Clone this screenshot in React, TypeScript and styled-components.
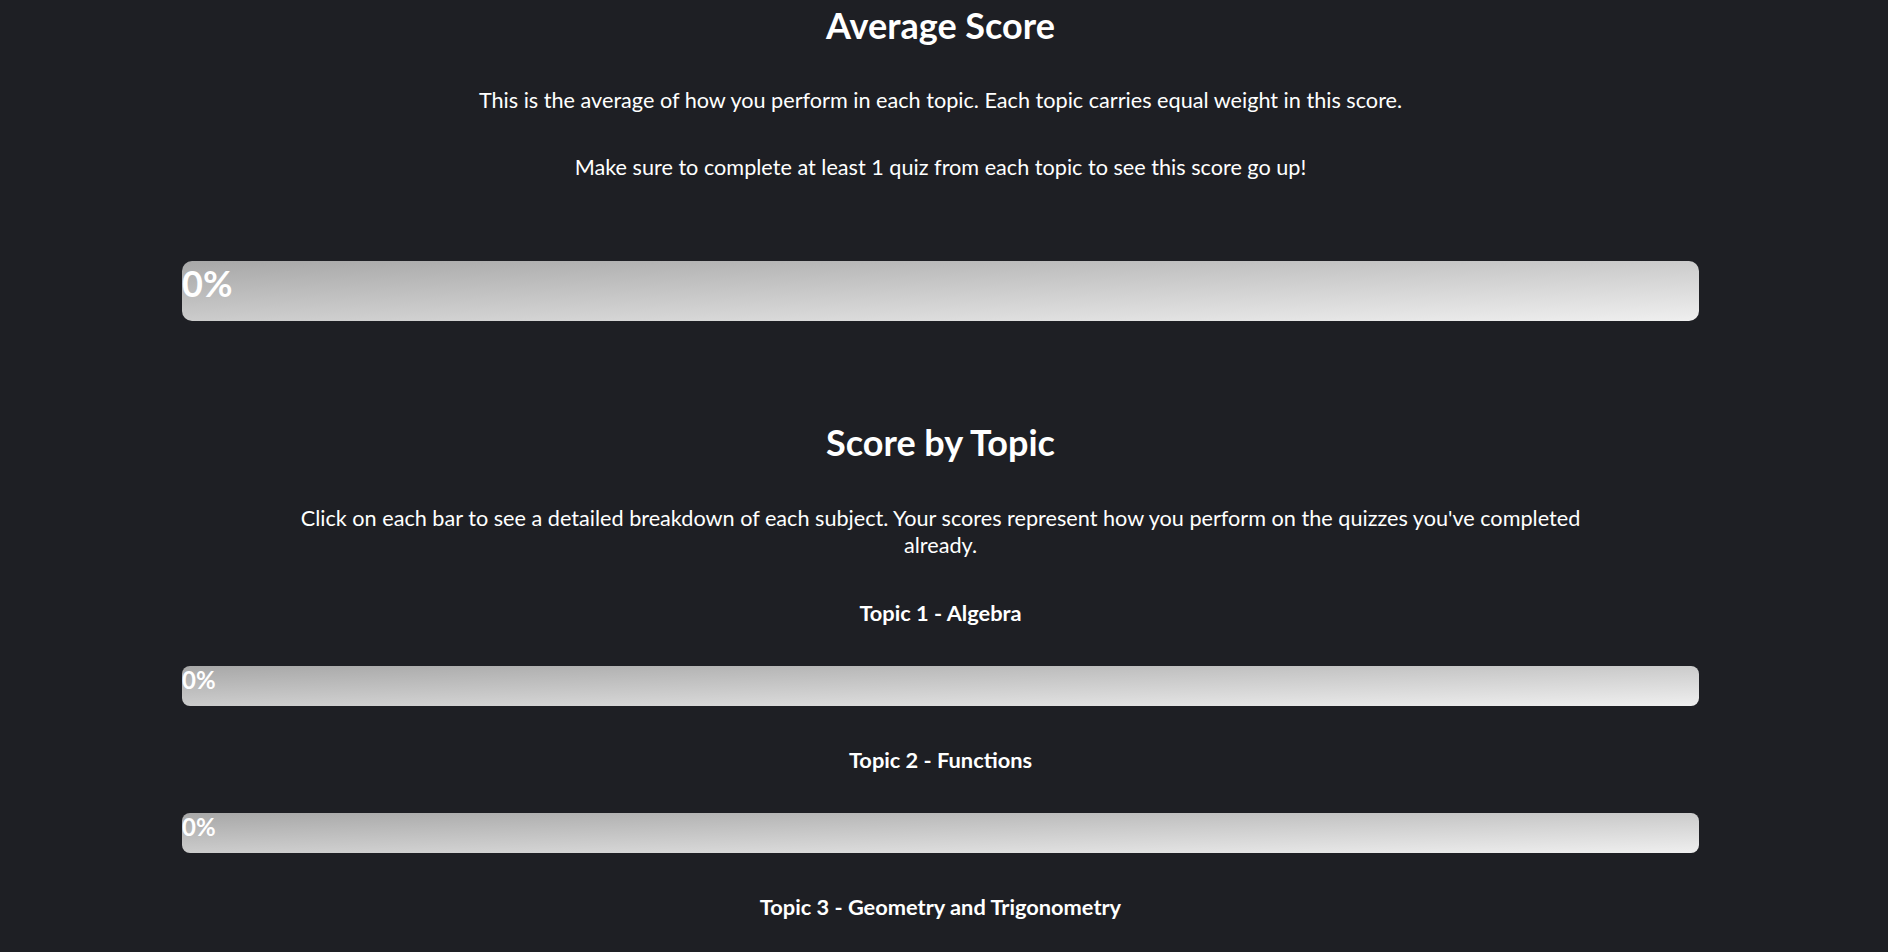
import React from "react";
import styled, { createGlobalStyle } from "styled-components";

const GlobalStyle = createGlobalStyle`
  html, body {
    margin: 0;
    padding: 0;
    background: #1e1f24;
  }
  body {
    font-family: Lato, "Open Sans", sans-serif;
    color: #ffffff;
  }
`;

const Page = styled.main`
  display: flex;
  flex-direction: column;
  padding: 0 189px 0 182px;
  min-height: 952px;
  box-sizing: border-box;
`;

const Section = styled.section<{ $top: number }>`
  display: flex;
  flex-direction: column;
  align-items: stretch;
  margin-top: ${(p) => p.$top}px;
`;

const Heading = styled.h2`
  margin: 0;
  font-size: 36px;
  font-weight: 700;
  line-height: 1.2;
  text-align: center;
`;

const Text = styled.p<{ $top: number }>`
  margin: ${(p) => p.$top}px auto 0;
  max-width: 1320px;
  font-size: 21.65px;
  line-height: 27px;
  text-align: center;
`;

const TopicLabel = styled.h3`
  margin: 41px 0 0;
  font-size: 21.8px;
  font-weight: 700;
  line-height: 26px;
  text-align: center;
`;

const Bar = styled.div<{ $big?: boolean; $top: number }>`
  margin-top: ${(p) => p.$top}px;
  height: ${(p) => (p.$big ? 60 : 40)}px;
  border-radius: ${(p) => (p.$big ? 10 : 8)}px;
  background: linear-gradient(to bottom right, #a8a8a8, #efefef);
  overflow: hidden;
  cursor: ${(p) => (p.$big ? "default" : "pointer")};
`;

const Fill = styled.div<{ $big?: boolean }>`
  height: 100%;
  padding-top: ${(p) => (p.$big ? 1 : 0)}px;
  box-sizing: border-box;
  font-size: ${(p) => (p.$big ? 36 : 24)}px;
  font-weight: 700;
  line-height: 1.2;
  color: #ffffff;
  white-space: nowrap;
`;

const topics = [
  { name: "Topic 1 - Algebra", score: 0 },
  { name: "Topic 2 - Functions", score: 0 },
  { name: "Topic 3 - Geometry and Trigonometry", score: 0 },
  { name: "Topic 4 - Statistics and Probability", score: 0 },
  { name: "Topic 5 - Calculus", score: 0 },
];

export default function App() {
  return (
    <>
      <GlobalStyle />
      <Page>
        <Section $top={4}>
          <Heading>Average Score</Heading>
          <Text $top={40}>
            This is the average of how you perform in each topic. Each topic
            carries equal weight in this score.
          </Text>
          <Text $top={40}>
            Make sure to complete at least 1 quiz from each topic to see this
            score go up!
          </Text>
          <Bar $big $top={80}>
            <Fill $big style={{ width: "0%" }}>0%</Fill>
          </Bar>
        </Section>
        <Section $top={100}>
          <Heading>Score by Topic</Heading>
          <Text $top={41}>
            Click on each bar to see a detailed breakdown of each subject. Your
            scores represent how you perform on the quizzes you've completed
            already.
          </Text>
          {topics.map((t) => (
            <React.Fragment key={t.name}>
              <TopicLabel>{t.name}</TopicLabel>
              <Bar $top={40}>
                <Fill style={{ width: `${t.score}%` }}>{t.score}%</Fill>
              </Bar>
            </React.Fragment>
          ))}
        </Section>
      </Page>
    </>
  );
}
